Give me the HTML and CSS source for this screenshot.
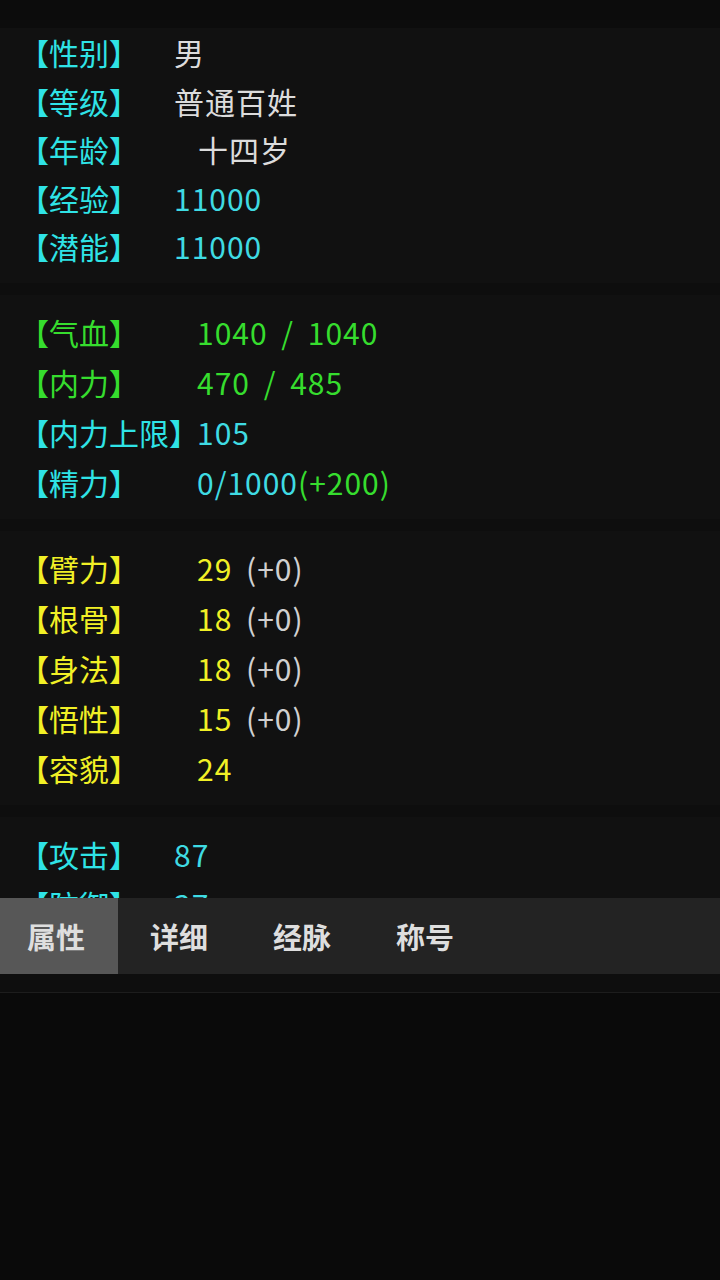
FILE: index.html
```html
<!DOCTYPE html>
<html lang="zh">
<head>
<meta charset="utf-8">
<link rel="stylesheet" href="styles.css">
</head>
<body>
<div class="app">
  <div class="topbar"></div>
  <div class="content">
    <section class="panel first narrow">
      <div class="row"><span class="lab cyan">【性别】</span><span class="val white">男</span></div>
      <div class="row"><span class="lab cyan">【等级】</span><span class="val white">普通百姓</span></div>
      <div class="row"><span class="lab cyan">【年龄】</span><span class="val white indent">十四岁</span></div>
      <div class="row"><span class="lab cyan">【经验】</span><span class="val cyanv">11000</span></div>
      <div class="row"><span class="lab cyan">【潜能】</span><span class="val cyanv">11000</span></div>
    </section>
    <div class="sep"></div>
    <section class="panel wide">
      <div class="row"><span class="lab green">【气血】</span><span class="val green">1040 / 1040</span></div>
      <div class="row"><span class="lab green">【内力】</span><span class="val green">470 / 485</span></div>
      <div class="row"><span class="lab cyan">【内力上限】</span><span class="val cyanv">105</span></div>
      <div class="row"><span class="lab cyan">【精力】</span><span class="val cyanv">0/1000<span class="green">(+200)</span></span></div>
    </section>
    <div class="sep"></div>
    <section class="panel wide">
      <div class="row"><span class="lab yellow">【臂力】</span><span class="val yellow">29 <span class="gray">(+0)</span></span></div>
      <div class="row"><span class="lab yellow">【根骨】</span><span class="val yellow">18 <span class="gray">(+0)</span></span></div>
      <div class="row"><span class="lab yellow">【身法】</span><span class="val yellow">18 <span class="gray">(+0)</span></span></div>
      <div class="row"><span class="lab yellow">【悟性】</span><span class="val yellow">15 <span class="gray">(+0)</span></span></div>
      <div class="row"><span class="lab yellow">【容貌】</span><span class="val yellow">24</span></div>
    </section>
    <div class="sep"></div>
    <section class="panel narrow">
      <div class="row"><span class="lab cyan">【攻击】</span><span class="val cyanv">87</span></div>
      <div class="row"><span class="lab cyan">【防御】</span><span class="val cyanv">37</span></div>
      <div class="row"><span class="lab cyan">【命中】</span><span class="val cyanv">20</span></div>
    </section>
  </div>
  <nav class="tabs">
    <div class="tab active">属性</div>
    <div class="tab">详细</div>
    <div class="tab">经脉</div>
    <div class="tab">称号</div>
  </nav>
  <div class="under"></div>
  <div class="bottom"></div>
</div>
</body>
</html>
```
FILE: styles.css
```css
html, body {
  margin: 0;
  padding: 0;
  background: #0b0b0b;
}
body {
  font-family: "Noto Sans CJK SC", "Noto Sans", sans-serif;
  width: 720px;
  height: 1280px;
  overflow: hidden;
}
.app {
  display: flex;
  flex-direction: column;
  height: 1280px;
}
.topbar {
  height: 28px;
  background: #0c0c0c;
  flex: none;
}
.content {
  height: 870px;
  overflow: hidden;
  flex: none;
  background: #111111;
}
.panel {
  background: #111111;
  padding: 12px 0 12px 19px;
}
.panel.first {
  padding-top: 0;
}
.panel.first .row {
  height: 48.5px;
  line-height: 48.5px;
}
.sep {
  height: 12px;
  background: #0e0e0e;
}
.row {
  display: flex;
  height: 50px;
  line-height: 50px;
  font-size: 30px;
  white-space: nowrap;
}
.lab {
  flex: none;
}
.val {
  letter-spacing: 1px;
  word-spacing: 6px;
}
.narrow .lab { width: 155px; }
.wide .lab { width: 178px; }
.indent { padding-left: 24px; }
.cyan { color: #2fe3e6; }
.cyanv { color: #3fdbe3; }
.green { color: #36dd2e; }
.yellow { color: #f1f026; }
.white { color: #dcdcdc; }
.gray { color: #d0d0d0; }
.tabs {
  height: 76px;
  flex: none;
  display: flex;
  background: #232323;
}
.tab {
  width: 118px;
  margin-right: 5px;
  box-sizing: border-box;
  padding-right: 6px;
  text-align: center;
  line-height: 76px;
  font-size: 29px;
  font-weight: bold;
  color: #dedede;
}
.tab.active {
  background: #575757;
}
.under {
  height: 18px;
  flex: none;
  background: #0e0e0e;
  border-bottom: 1px solid #1d1d1d;
}
.bottom {
  flex: 1;
  background: #0a0a0a;
}
```
